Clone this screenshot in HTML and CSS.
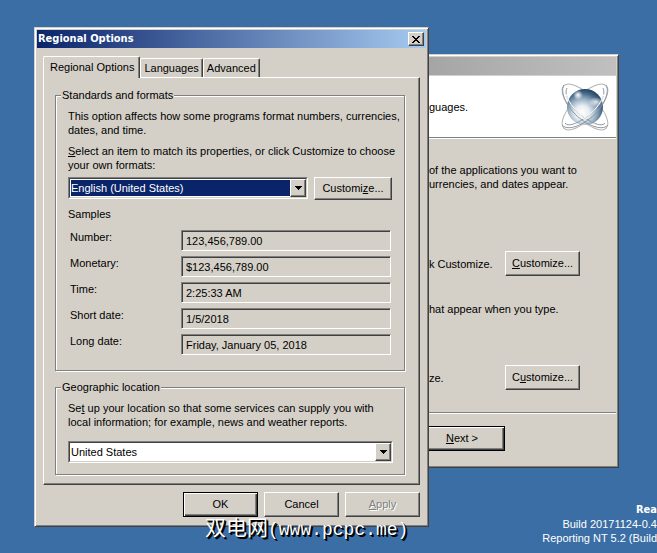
FILE: index.html
```html
<!DOCTYPE html>
<html lang="en">
<head>
<meta charset="utf-8">
<title>Regional Options</title>
<link rel="stylesheet" href="styles.css">
</head>
<body>
<main class="desktop">
  <div class="build-info">
    <strong>Rea</strong>
    <span>Build 20171124-0.4</span>
    <span>Reporting NT 5.2 (Build</span>
  </div>

  <section class="window wizard">
    <div class="titlebar titlebar-inactive"></div>
    <header class="wizard-header">
      <p>guages.</p>
      <svg class="globe" viewBox="0 0 50 48" aria-hidden="true">
        <defs>
          <radialGradient id="ball" cx="0.42" cy="0.66" r="0.66">
            <stop offset="0" stop-color="#ffffff"/>
            <stop offset="0.3" stop-color="#e8eef3"/>
            <stop offset="0.6" stop-color="#93abc0"/>
            <stop offset="0.82" stop-color="#486b8b"/>
            <stop offset="1" stop-color="#244766"/>
          </radialGradient>
          <radialGradient id="glint">
            <stop offset="0" stop-color="#ffffff"/>
            <stop offset="1" stop-color="#ffffff" stop-opacity="0"/>
          </radialGradient>
        </defs>
        <g fill="none" stroke="#b4b4b4" stroke-width="1">
          <ellipse cx="25" cy="24" rx="30" ry="12" transform="rotate(45 25 24)"/>
          <ellipse cx="25" cy="24" rx="30" ry="12" transform="rotate(-45 25 24)"/>
        </g>
        <circle cx="25" cy="24" r="18" fill="url(#ball)"/>
        <circle cx="18" cy="12" r="5" fill="url(#glint)"/>
        <ellipse cx="36" cy="19" rx="8" ry="5" fill="url(#glint)" opacity="0.8"/>
        <g fill="none" stroke="#8f989f" stroke-width="1">
          <path d="M4 2C-1 10 9 28 22 37C33 45 44 47 48 42"/>
          <path d="M7 5C3 13 13 27 25 35C34 41 42 44 45 40"/>
          <path d="M46 2C51 10 41 28 28 37C17 45 6 47 2 42"/>
          <path d="M43 5C47 13 37 27 25 35C16 41 8 44 5 40"/>
        </g>
        <path d="M6 11C9 21 17 30 27 36M44 11C41 21 33 30 23 36" fill="none" stroke="#ffffff" stroke-width="1"/>
      </svg>
    </header>
    <div class="wizard-body">
      <p class="wizard-intro">of the applications you want to<br>urrencies, and dates appear.</p>
      <div class="wizard-row">
        <p>k Customize.</p>
        <button class="button" type="button"><u>C</u>ustomize...</button>
      </div>
      <p class="wizard-typing">hat appear when you type.</p>
      <div class="wizard-row">
        <p>ze.</p>
        <button class="button" type="button">C<u>u</u>stomize...</button>
      </div>
    </div>
    <footer class="wizard-footer">
      <button class="button button-default" type="button"><u>N</u>ext &gt;</button>
    </footer>
  </section>

  <section class="window dialog">
    <div class="titlebar">
      <h1>Regional Options</h1>
      <button class="close" type="button" aria-label="Close">
        <svg viewBox="0 0 8 7" aria-hidden="true"><path d="M0 0h2v1h1v1h2v-1h1v-1h2v1h-1v1h-1v1h-1v1h1v1h1v1h1v1h-2v-1h-1v-1h-2v1h-1v1h-2v-1h1v-1h1v-1h1v-1h-1v-1h-1v-1h-1z"/></svg>
      </button>
    </div>
    <div class="tabs" role="tablist">
      <button class="tab tab-active" type="button" role="tab" aria-selected="true">Regional Options</button>
      <button class="tab" type="button" role="tab" aria-selected="false">Languages</button>
      <button class="tab" type="button" role="tab" aria-selected="false">Advanced</button>
    </div>
    <form class="pane" id="options">
      <fieldset class="group">
        <legend>Standards and formats</legend>
        <p>This option affects how some programs format numbers, currencies,<br>dates, and time.</p>
        <label class="prompt" for="format"><u>S</u>elect an item to match its properties, or click Customize to choose<br>your own formats:</label>
        <div class="format-row">
          <div class="combo">
            <select class="selected" id="format"><option>English (United States)</option></select>
            <span class="arrow"><svg viewBox="0 0 7 4" aria-hidden="true"><path d="M0 0h7v1h-1v1h-1v1h-1v1h-1v-1h-1v-1h-1v-1h-1z"/></svg></span>
          </div>
          <button class="button" type="button">Customi<u>z</u>e...</button>
        </div>
        <p class="samples-title">Samples</p>
        <div class="samples">
          <label for="number">Number:</label><input id="number" readonly value="123,456,789.00">
          <label for="money">Monetary:</label><input id="money" readonly value="$123,456,789.00">
          <label for="time">Time:</label><input id="time" readonly value="2:25:33 AM">
          <label for="short">Short date:</label><input id="short" readonly value="1/5/2018">
          <label for="long">Long date:</label><input id="long" readonly value="Friday, January 05, 2018">
        </div>
      </fieldset>
      <fieldset class="group group-location">
        <legend>Geographic location</legend>
        <label class="location-prompt" for="location">Se<u>t</u> up your location so that some services can supply you with<br>local information; for example, news and weather reports.</label>
        <div class="combo">
          <select id="location"><option>United States</option></select>
          <span class="arrow"><svg viewBox="0 0 7 4" aria-hidden="true"><path d="M0 0h7v1h-1v1h-1v1h-1v1h-1v-1h-1v-1h-1v-1h-1z"/></svg></span>
        </div>
      </fieldset>
    </form>
    <footer class="actions">
      <button class="button button-default" type="submit" form="options">OK</button>
      <button class="button" type="button">Cancel</button>
      <button class="button" type="button" disabled><u>A</u>pply</button>
    </footer>
  </section>

  <p class="watermark"><span lang="zh">双电网</span>(www.pcpc.me)</p>
</main>
</body>
</html>
```
FILE: styles.css
```css
:root {
  --face: #d4d0c8;
  --shade: #808080;
  --dark: #404040;
  --navy: #0a246a;
}

* {
  box-sizing: border-box;
}

body,
p,
h1 {
  margin: 0;
}

body,
button,
input,
select {
  font: 11px/14px "Liberation Sans", "Noto Sans", sans-serif;
  color: #000;
}

.desktop {
  position: relative;
  min-height: 100vh;
  overflow: hidden;
  background: #3a6ea5;
}

.build-info {
  position: absolute;
  right: 0;
  bottom: 8px;
  display: flex;
  flex-direction: column;
  align-items: flex-end;
  color: #fff;
}

.build-info strong,
.titlebar h1 {
  font-family: "DejaVu Sans Condensed", "Noto Sans", sans-serif;
}

/* Windows */

.window {
  position: absolute;
  padding: 2px;
  background: var(--face);
  border: 1px solid;
  border-color: var(--face) var(--dark) var(--dark) var(--face);
  box-shadow: inset 1px 1px #fff, inset -1px -1px var(--shade);
}

.titlebar {
  display: flex;
  align-items: center;
  justify-content: space-between;
  height: 18px;
  padding: 0 2px 0 1px;
  background: linear-gradient(to right, var(--navy), #a6caf0);
}

.titlebar-inactive {
  background: linear-gradient(to right, #a0a0a0, #c0c0c0);
}

.titlebar h1 {
  font-size: 11px;
  line-height: 16px;
  color: #fff;
}

.close {
  display: flex;
  align-items: center;
  justify-content: center;
  width: 16px;
  height: 14px;
  padding: 0;
}

.close svg {
  width: 8px;
  height: 7px;
}

.button,
.close,
.arrow {
  background: var(--face);
  border: 1px solid;
  border-color: #fff var(--dark) var(--dark) #fff;
  box-shadow: inset -1px -1px var(--shade);
}

.button {
  min-width: 75px;
  height: 25px;
  padding: 0 0 2px;
  text-align: center;
}

.button:disabled {
  color: var(--shade);
  text-shadow: 1px 1px #fff;
}

.button-default {
  border-color: #000;
  box-shadow: inset 1px 1px #fff, inset -1px -1px var(--dark), inset -2px -2px var(--shade);
}

/* Setup wizard */

.wizard {
  left: 390px;
  top: 54px;
  width: 229px;
}

.wizard-header {
  display: flex;
  align-items: center;
  justify-content: space-between;
  height: 62px;
  margin-top: 1px;
  padding: 0 6px 0 36px;
  background: #fff;
  border-bottom: 1px solid var(--shade);
}

.globe {
  width: 50px;
  height: 48px;
}

.wizard-body {
  padding: 24px 36px 22px 36px;
  border-top: 1px solid #fff;
  border-bottom: 1px solid var(--shade);
}

.wizard-row {
  display: flex;
  align-items: center;
  justify-content: space-between;
}

.wizard-intro {
  margin-bottom: 60px;
  white-space: nowrap;
}

.wizard-typing {
  margin: 26px 0 49px;
}

.wizard-footer {
  display: flex;
  padding: 12px 26px 14px;
  border-top: 1px solid #fff;
}

.wizard-footer .button {
  width: 86px;
}

/* Dialog */

.dialog {
  left: 34px;
  top: 27px;
  width: 395px;
}

.tabs {
  display: flex;
  align-items: flex-end;
  margin-top: 8px;
  padding-left: 6px;
}

.tab {
  height: 19px;
  padding: 0 3px;
  background: var(--face);
  border: 1px solid;
  border-color: #fff var(--dark) transparent #fff;
  border-bottom: 0;
  border-radius: 2px 2px 0 0;
  box-shadow: inset -1px 0 var(--shade);
}

.tab-active {
  position: relative;
  height: 22px;
  margin-bottom: -1px;
  padding: 0 5px 2px 6px;
}

.pane {
  margin: 0 6px;
  padding: 10px 14px 9px 11px;
  border: 1px solid;
  border-color: #fff var(--dark) var(--dark) #fff;
  box-shadow: inset -1px -1px var(--shade);
}

.group {
  min-width: 0;
  margin: 0;
  padding: 7px 12px 15px;
  border: 1px solid var(--shade);
  box-shadow: inset 1px 1px #fff, 1px 1px #fff;
  white-space: nowrap;
}

.group legend {
  margin-left: -7px;
  padding: 0 1px;
  background: var(--face);
}

.group-location {
  margin-top: 9px;
  padding-right: 11px;
  padding-bottom: 11px;
}

.prompt,
.location-prompt {
  display: block;
}

.prompt {
  margin: 7px 0 5px;
}

.location-prompt {
  margin-bottom: 12px;
}

.format-row {
  display: flex;
  gap: 6px;
}

.format-row .combo {
  flex: 1;
}

.format-row .button {
  width: 78px;
  height: 23px;
}

.combo {
  position: relative;
  height: 22px;
  border: 1px solid;
  border-color: var(--shade) #fff #fff var(--shade);
  background: #fff;
}

.combo select {
  width: 100%;
  height: 100%;
  padding: 0 18px 0 1px;
  appearance: none;
  background: #fff;
  border: 1px solid;
  border-color: var(--dark) var(--face) var(--face) var(--dark);
  border-radius: 0;
}

.combo .selected {
  color: #fff;
  background: var(--navy);
  box-shadow: inset 1px 1px #fff, inset -1px -1px #fff;
}

.arrow {
  position: absolute;
  top: 1px;
  right: 1px;
  bottom: 1px;
  display: flex;
  align-items: center;
  justify-content: center;
  width: 16px;
  pointer-events: none;
}

.arrow svg {
  width: 7px;
  height: 4px;
}

.samples-title {
  margin: 7px 0 9px;
}

.samples {
  display: grid;
  grid-template-columns: 111px 1fr;
  row-gap: 5px;
  padding: 0 1px 0 2px;
}

.samples input {
  width: 100%;
  height: 21px;
  padding: 0 4px;
  background: var(--face);
  border: 1px solid;
  border-color: var(--shade) #fff #fff var(--shade);
  border-radius: 0;
  box-shadow: inset 1px 1px var(--dark);
}

.actions {
  display: flex;
  justify-content: flex-end;
  gap: 6px;
  padding: 7px 6px 7px;
}

.watermark {
  position: absolute;
  left: 205px;
  top: 513px;
  font: 18px/26px "Liberation Mono", "Noto Sans CJK SC", monospace;
  color: #fff;
  text-shadow: 1px 1px #000, 2px 2px #000;
}

.watermark span {
  font-family: "Noto Sans CJK SC", sans-serif;
  font-size: 21px;
}
```
